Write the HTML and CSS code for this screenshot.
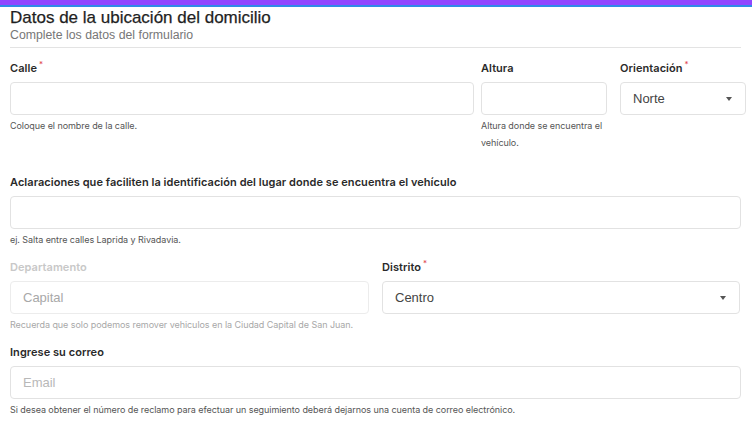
FILE: index.html
```html
<!DOCTYPE html>
<html lang="es">
<head>
<meta charset="utf-8">
<title>Datos de la ubicación del domicilio</title>
<link rel="stylesheet" href="styles.css">
</head>
<body>
<div class="topbar"></div>
<main class="form">
  <header class="head">
    <h1 class="title">Datos de la ubicación del domicilio</h1>
    <p class="subtitle">Complete los datos del formulario</p>
  </header>
  <hr class="divider">

  <div class="row row-1">
    <div class="field">
      <label class="label">Calle<span class="req">*</span></label>
      <div class="input"></div>
      <p class="help">Coloque el nombre de la calle.</p>
    </div>
    <div class="field">
      <label class="label">Altura</label>
      <div class="input"></div>
      <p class="help">Altura donde se encuentra el vehículo.</p>
    </div>
    <div class="field field-orient">
      <label class="label">Orientación<span class="req">*</span></label>
      <div class="input select"><span class="value">Norte</span><span class="caret"></span></div>
    </div>
  </div>

  <div class="row row-2">
    <div class="field">
      <label class="label">Aclaraciones que faciliten la identificación del lugar donde se encuentra el vehículo</label>
      <div class="input"></div>
      <p class="help">ej. Salta entre calles Laprida y Rivadavia.</p>
    </div>
  </div>

  <div class="row row-3">
    <div class="field disabled">
      <label class="label">Departamento</label>
      <div class="input"><span class="value">Capital</span></div>
      <p class="help">Recuerda que solo podemos remover vehiculos en la Ciudad Capital de San Juan.</p>
    </div>
    <div class="field">
      <label class="label">Distrito<span class="req">*</span></label>
      <div class="input select"><span class="value">Centro</span><span class="caret"></span></div>
    </div>
  </div>

  <div class="row row-4">
    <div class="field">
      <label class="label">Ingrese su correo</label>
      <div class="input"><span class="value placeholder">Email</span></div>
      <p class="help">Si desea obtener el número de reclamo para efectuar un seguimiento deberá dejarnos una cuenta de correo electrónico.</p>
    </div>
  </div>
</main>
</body>
</html>
```

FILE: styles.css
```css
* { box-sizing: border-box; }

html, body {
  margin: 0;
  padding: 0;
  background: #ffffff;
}

body {
  font-family: "Liberation Sans", Arial, sans-serif;
  color: #222;
  overflow: hidden;
}

.topbar {
  height: 7px;
  background: #9146ff;
  border-bottom: 2px solid #2f8ae8;
}

.form {
  padding: 0 0 0 10px;
  width: 741px;
}

.head {
  padding-top: 1px;
}

.title {
  margin: 0;
  font-size: 17px;
  line-height: 19px;
  font-weight: normal;
  color: #1f1f1f;
  -webkit-text-stroke: 0.25px #1f1f1f;
}

.subtitle {
  margin: 1px 0 0;
  font-size: 12.3px;
  line-height: 14px;
  color: #777;
}

.divider {
  margin: 5px 0 0;
  border: 0;
  border-top: 1px solid #e3e3e3;
  height: 0;
}

.row {
  display: grid;
  align-items: start;
}

.row-1 {
  margin-top: 14px;
  grid-template-columns: 464px 126px 126px;
  column-gap: 7px;
  width: 740px;
}
.field-orient {
  margin-left: 6px;
  width: 126px;
}

.row-2 { margin-top: 25px; }

.row-3 {
  margin-top: 13px;
  grid-template-columns: 359px 358px;
  column-gap: 13px;
}

.row-4 { margin-top: 13px; }

.field {
  display: flex;
  flex-direction: column;
  min-width: 0;
}

.label {
  font-family: Inter, "Liberation Sans", sans-serif;
  font-size: 11px;
  line-height: 13px;
  font-weight: 600;
  color: #2a2a2a;
  letter-spacing: 0.05px;
  margin-bottom: 7px;
}

.req {
  color: #e0424b;
  font-size: 8px;
  line-height: 0;
  vertical-align: 5px;
  margin-left: 2px;
  font-weight: 400;
}

.input {
  height: 33px;
  border: 1px solid #e2e2e2;
  border-radius: 4px;
  background: #fff;
  display: flex;
  align-items: center;
  padding: 0 12px;
}

.value {
  font-size: 13px;
  color: #444;
}

.placeholder { color: #b8b8b8; }

.select {
  justify-content: space-between;
  padding-right: 13px;
}

.caret {
  width: 0;
  height: 0;
  border-left: 3.5px solid transparent;
  border-right: 3.5px solid transparent;
  border-top: 4px solid #555;
}

.help {
  margin: 2px 0 0;
  font-family: Inter, "Liberation Sans", sans-serif;
  font-size: 9px;
  line-height: 17px;
  color: #555;
  letter-spacing: -0.06px;
}

.disabled .label { color: #c8c8c8; }
.disabled .value { color: #a8a8a8; }
.disabled .help { color: #a8a8a8; }
.disabled .input { border-color: #ececec; }
```
